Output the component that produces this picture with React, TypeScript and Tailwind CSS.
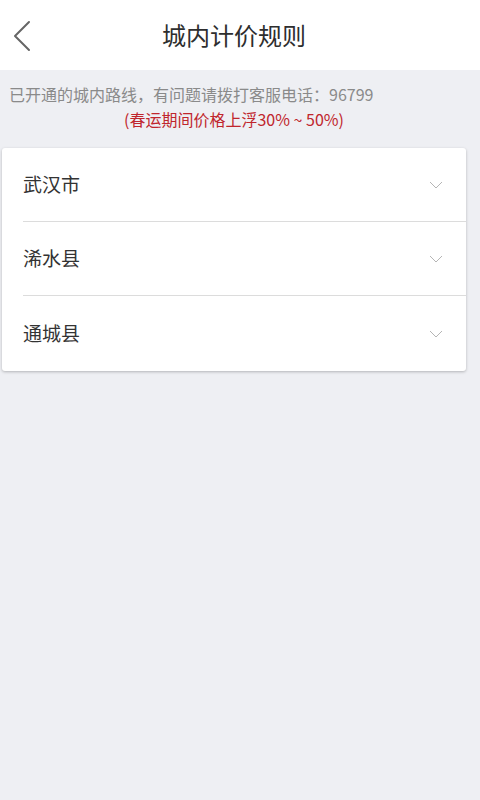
const cities = ["武汉市", "浠水县", "通城县"];

function BackIcon() {
  return (
    <svg width="20" height="32" viewBox="0 0 20 32" fill="none">
      <path d="M17 2 L3 16 L17 30" stroke="#666" strokeWidth="2" strokeLinecap="round" strokeLinejoin="round" />
    </svg>
  );
}

function Chevron() {
  return (
    <svg width="14" height="8" viewBox="0 0 14 8" fill="none">
      <path d="M1 1 L7 7 L13 1" stroke="#b5b5b5" strokeWidth="1" />
    </svg>
  );
}

export default function App() {
  return (
    <div
      className="flex min-h-[800px] w-[480px] flex-col bg-[#eeeff3]"
      style={{ fontFamily: '"Noto Sans CJK SC", "Noto Sans", sans-serif' }}
    >
      <header className="relative flex h-[70px] items-center justify-center bg-white">
        <div className="absolute left-[12px] top-[20px]">
          <BackIcon />
        </div>
        <h1 className="text-[24px] text-[#2e2e2e] -translate-x-[6px]">城内计价规则</h1>
      </header>

      <div className="pt-[12px]">
        <p className="pl-[9px] text-[16px] leading-[25px] text-[#8a8a8a]">
          已开通的城内路线，有问题请拨打客服电话：96799
        </p>
        <p className="text-center text-[16px] leading-[25px] text-[#c0262d] -translate-x-[6px]">
          (春运期间价格上浮30% ~ 50%)
        </p>
      </div>

      <div className="mt-[16px] ml-[2px] w-[464px] rounded-[3px] bg-white shadow-[0_1px_3px_rgba(0,0,0,0.25)]">
        {cities.map((c, i) => (
          <div key={c} className="pl-[21px]">
            <div
              className={
                "flex items-center justify-between pr-[23px] " +
                (i < cities.length - 1 ? "h-[74px] border-b border-[#dcdcdc]" : "h-[75px]")
              }
            >
              <span className="text-[19px] text-[#333]">{c}</span>
              <Chevron />
            </div>
          </div>
        ))}
      </div>
    </div>
  );
}
